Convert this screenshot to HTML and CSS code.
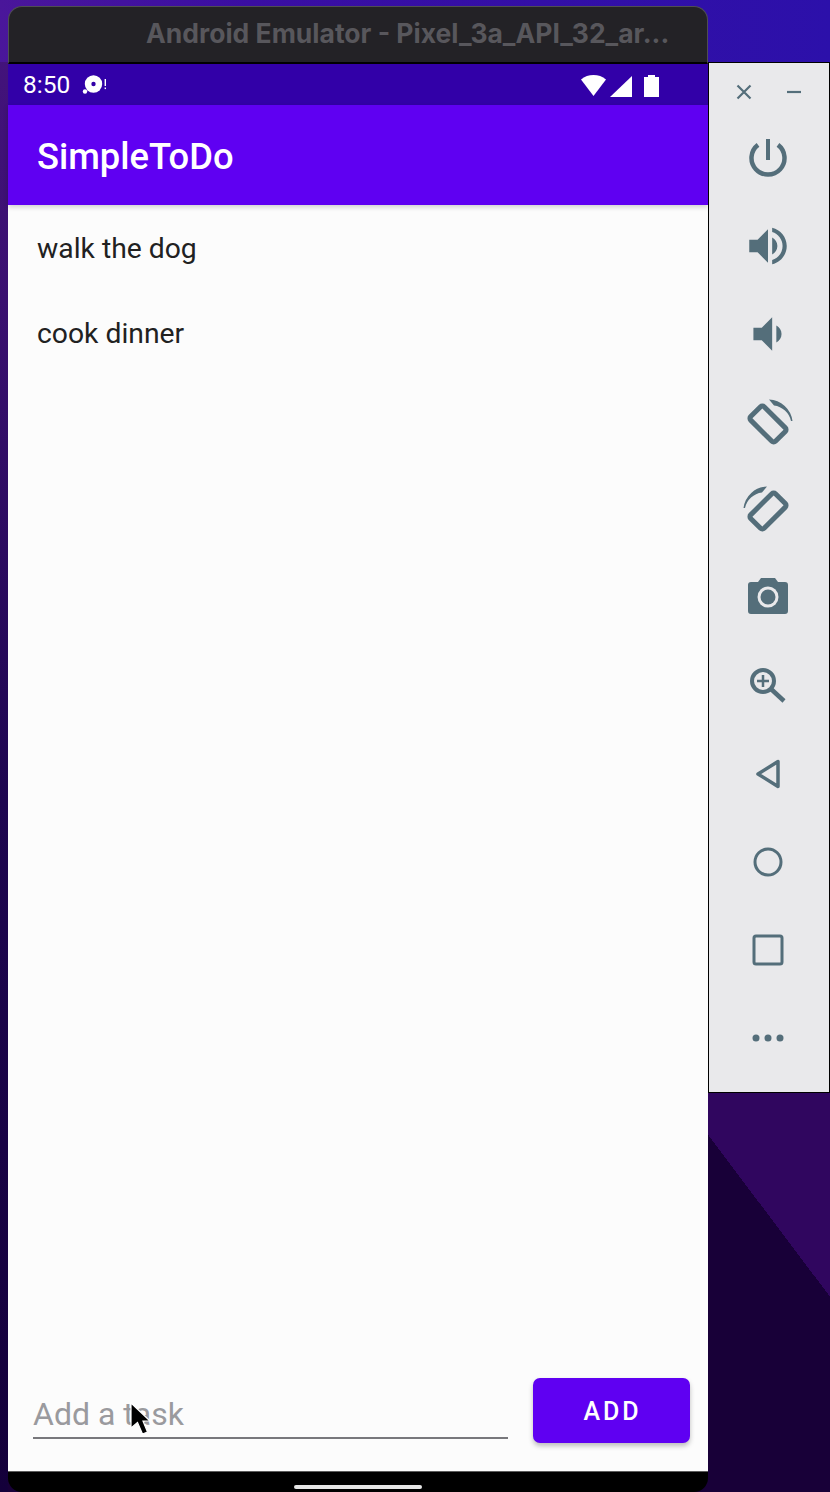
FILE: index.html
```html
<!DOCTYPE html>
<html lang="en">
<head>
<meta charset="utf-8">
<title>Android Emulator</title>
<link rel="stylesheet" href="styles.css">
</head>
<body>
<div class="desktop">
  <main class="emulator">
    <header class="titlebar">Android Emulator - Pixel_3a_API_32_ar...</header>
    <div class="statusbar">
      <span class="clock">8:50</span>
      <svg class="notif" width="26" height="24" viewBox="0 0 26 24">
        <circle cx="11.500" cy="11" r="8.7" fill="#fff"/>
        <circle cx="11.500" cy="11" r="2.2" fill="#3200a8"/>
        <circle cx="3" cy="18.500" r="2.2" fill="#fff"/>
        <rect x="22.6" y="6" width="1.4" height="7" fill="#fff"/>
        <rect x="22.6" y="14.5" width="1.4" height="1.6" fill="#fff"/>
      </svg>
      <svg class="sysicons" width="80" height="24" viewBox="0 0 80 24">
        <path d="M1 6.500C4.500 3.400 9 2 13.500 2S22.500 3.400 26 6.500L13.500 23Z" fill="#fff"/>
        <path d="M30 24L52 3V24Z" fill="#fff"/>
        <path d="M68 2H75V4H79V24H64V4H68Z" fill="#fff"/>
      </svg>
    </div>
    <div class="appbar">SimpleToDo</div>
    <section class="content">
      <ul class="tasks">
        <li class="task">walk the dog</li>
        <li class="task">cook dinner</li>
      </ul>
      <form class="composer">
        <div class="field">Add a task</div>
        <button class="add" type="button">ADD</button>
      </form>
    </section>
    <div class="navbar"><span class="pill"></span></div>
  </main>

  <aside class="panel">
    <div class="panel-head">
      <svg class="win" width="20" height="20" viewBox="0 0 20 20"><path d="M3.500 3.500L16.500 16.500M16.500 3.500L3.500 16.500"/></svg>
      <svg class="win" width="20" height="20" viewBox="0 0 20 20"><path d="M3 10H17"/></svg>
    </div>
    <div class="tool"><svg class="ico" viewBox="0 0 50 50"><path class="ln w45" d="M15 11.900A16.500 16.500 0 1 0 35 11.900"/><path class="ln w4" d="M25 6V27"/></svg></div>
    <div class="tool"><svg class="ico" viewBox="0 0 24 24"><path class="fl" d="M3 9v6h4l5 5V4L7 9H3zm13.500 3c0-1.770-1.020-3.290-2.500-4.030v8.050c1.480-.73 2.500-2.250 2.500-4.020zM14 3.230v2.060c2.890.86 5 3.540 5 6.710s-2.110 5.850-5 6.710v2.060c4.010-.91 7-4.490 7-8.770s-2.990-7.860-7-8.770z"/></svg></div>
    <div class="tool"><svg class="ico" viewBox="0 0 24 24"><path class="fl" d="M18.500 12c0-1.770-1.020-3.290-2.500-4.030v8.050c1.480-.73 2.500-2.250 2.500-4.020zM5 9v6h4l5 5V4L9 9H5z"/></svg></div>
    <div class="tool"><svg class="ico flip" viewBox="0 0 50 50"><rect class="ln w5" x="7.500" y="17.500" width="35" height="19" rx="2.500" transform="rotate(-45 25 27)"/><path class="fl" d="M0.500 24A24.500 24.500 0 0 1 24 2.500L19 8.500A20 20 0 0 0 2 24Z"/></svg></div>
    <div class="tool"><svg class="ico" viewBox="0 0 50 50"><rect class="ln w5" x="7.500" y="16.500" width="35" height="19" rx="2.500" transform="rotate(-45 25 26)"/><path class="fl" d="M0.500 23A24.500 24.500 0 0 1 24 1.500L19 7.500A20 20 0 0 0 2 23Z"/></svg></div>
    <div class="tool"><svg class="ico" viewBox="0 0 50 50"><path class="fl" d="M18 5H32L35 9H42Q45 9 45 12V38Q45 41 42 41H8Q5 41 5 38V12Q5 9 8 9H15Z"/><circle class="hole" cx="25" cy="24" r="10.500"/><circle class="fl" cx="25" cy="24" r="7.500"/></svg></div>
    <div class="tool"><svg class="ico" viewBox="0 0 50 50"><circle class="ln w4" cx="20" cy="20" r="11"/><path class="ln w25" d="M14 20H26M20 14V26"/><path class="ln w45" d="M28 28L41 40"/></svg></div>
    <div class="tool"><svg class="ico" viewBox="0 0 50 50"><path class="ln w35 rj" d="M15 25L35 12.500V37.500Z"/></svg></div>
    <div class="tool"><svg class="ico" viewBox="0 0 50 50"><circle class="ln w3" cx="25" cy="25" r="13"/></svg></div>
    <div class="tool"><svg class="ico" viewBox="0 0 50 50"><rect class="ln w3" x="11" y="11" width="28" height="28" rx="2"/></svg></div>
    <div class="tool"><svg class="ico" viewBox="0 0 50 50"><circle class="fl" cx="13" cy="25" r="3.500"/><circle class="fl" cx="25" cy="25" r="3.500"/><circle class="fl" cx="37" cy="25" r="3.500"/></svg></div>
  </aside>

  <svg class="cursor" width="26" height="38" viewBox="0 0 26 38">
    <path d="M2 1V26L8.500 20.500L13.500 32L18.500 30L14 19H21Z" fill="#000" stroke="#fff" stroke-width="1.200"/>
  </svg>
</div>
</body>
</html>
```
FILE: styles.css
```css
* { box-sizing: border-box; }
html, body { margin: 0; padding: 0; }
body { width: 830px; height: 1492px; overflow: hidden; font-family: Roboto, "Liberation Sans", sans-serif; }

.desktop {
  position: relative;
  width: 830px;
  height: 1492px;
  overflow: hidden;
  background:
    linear-gradient(90deg, #4a169a 0, #3a0ea2 30%, #2c10aa 100%) 0 0 / 100% 62px no-repeat,
    linear-gradient(180deg, #45147e 0, #3a1070 300px, #1e0650 800px, #14003a 100%) 0 0 / 8px 100% no-repeat,
    linear-gradient(53deg, #180038 50%, #30065f 50%);
}

.emulator {
  position: absolute;
  left: 8px;
  top: 6px;
  width: 700px;
  height: 1486px;
  display: flex;
  flex-direction: column;
}

.titlebar {
  height: 58px;
  flex: none;
  padding: 11px 0 0 137px;
  background: #232226;
  border: 1px solid #4f4e52;
  border-bottom: 2px solid #000;
  border-radius: 14px 14px 0 0;
  color: #58575c;
  font-family: Inter, "Liberation Sans", sans-serif;
  font-weight: 700;
  font-size: 26.500px;
  line-height: 30px;
  white-space: nowrap;
  overflow: hidden;
}

.statusbar {
  height: 41px;
  flex: none;
  display: flex;
  align-items: center;
  padding: 0 48px 0 15px;
  background: #3200a8;
  color: #fff;
}
.clock { font-size: 24.500px; line-height: 28px; width: 59px; }
.notif { flex: none; }
.sysicons { flex: none; margin-left: auto; }

.appbar {
  height: 100px;
  flex: none;
  padding: 31px 0 0 29px;
  background: #5f00f2;
  color: #fff;
  font-size: 36.300px;
  line-height: 41px;
  font-weight: 500;
  box-shadow: 0 2px 5px rgba(0, 0, 0, .18);
  position: relative;
}

.content {
  flex: 1;
  min-height: 0;
  display: flex;
  flex-direction: column;
  background: #fcfcfc;
}
.tasks { list-style: none; margin: 0; padding: 0; flex: 1; }
.task {
  height: 85px;
  padding: 2px 0 0 29px;
  display: flex;
  align-items: center;
  color: #212121;
  font-size: 28.300px;
}

.composer {
  display: flex;
  align-items: flex-end;
  gap: 25px;
  padding: 0 18px 28px 25px;
  margin: 0;
}
.field {
  width: 475px;
  height: 52px;
  padding: 9px 0 0;
  margin-bottom: 4px;
  border-bottom: 2px solid #78787c;
  color: #9a9a9e;
  font-size: 32px;
  line-height: 36px;
}
.add {
  width: 157px;
  height: 65px;
  padding: 2px 0 0 2px;
  border: 0;
  border-radius: 7px;
  background: #5f00f2;
  color: #fff;
  font-family: Roboto, "Liberation Sans", sans-serif;
  font-size: 25px;
  font-weight: 500;
  letter-spacing: 3px;
  box-shadow: 0 3px 5px rgba(0, 0, 0, .25);
}

.navbar {
  height: 21px;
  flex: none;
  position: relative;
  display: flex;
  justify-content: center;
  background: #000;
  border-top: 1px solid #5c5c5c;
  border-radius: 0 0 14px 14px;
}
.pill { width: 128px; height: 4px; margin-top: 13px; border-radius: 2px; background: #e6e6e6; }

.panel {
  position: absolute;
  left: 708px;
  top: 62px;
  width: 122px;
  height: 1031px;
  display: flex;
  flex-direction: column;
  align-items: center;
  background: #e9e9eb;
  border: 1.500px solid #000;
}
.panel-head {
  width: 100%;
  height: 51px;
  flex: none;
  padding: 7px 0 0 0;
  display: flex;
  align-items: center;
  justify-content: center;
  gap: 30px;
}
.win path { fill: none; stroke: #546e7a; stroke-width: 2.200; }
.tool { height: 88px; width: 100%; flex: none; padding-right: 2px; display: flex; align-items: center; justify-content: center; }
.ico { width: 50px; height: 50px; overflow: visible; }
.flip { transform: scaleX(-1); }
.fl { fill: #546e7a; }
.hole { fill: #e9e9eb; }
.ln { fill: none; stroke: #546e7a; }
.rj { stroke-linejoin: round; }
.w25 { stroke-width: 2.500; }
.w3 { stroke-width: 3; }
.w35 { stroke-width: 3.500; }
.w4 { stroke-width: 4; }
.w45 { stroke-width: 4.500; }
.w5 { stroke-width: 5; }

.cursor { position: absolute; left: 129px; top: 1402px; }
```
